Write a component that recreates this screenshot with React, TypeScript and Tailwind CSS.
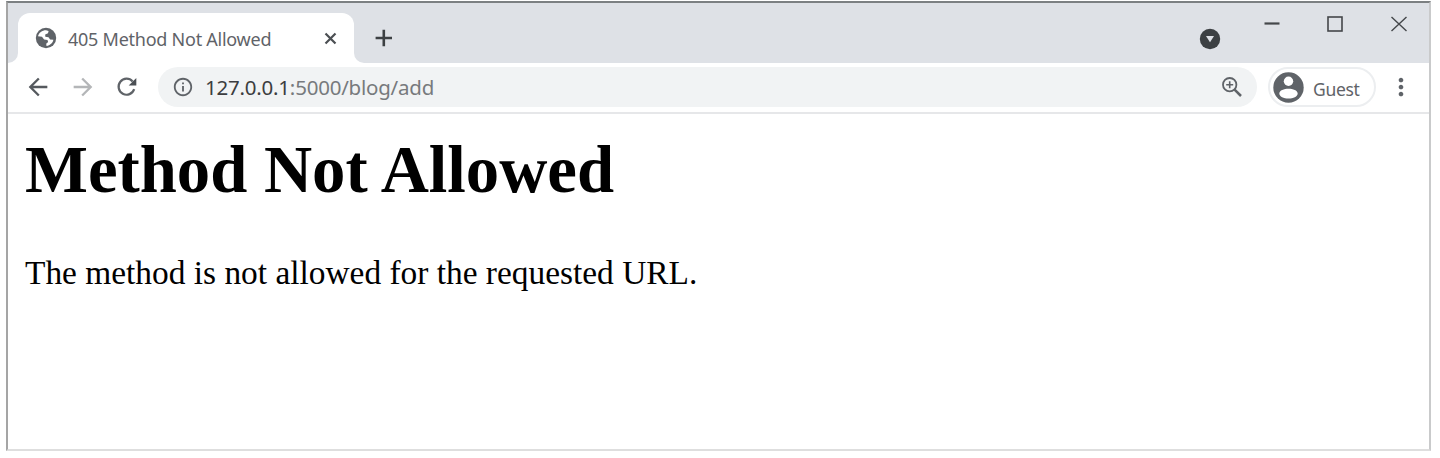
import type { ReactNode } from "react";
import { MdArrowBack, MdArrowForward, MdInfoOutline, MdMoreVert } from "react-icons/md";

function GlobeIcon() {
  return (
    <svg className="h-6 w-6 shrink-0" viewBox="0 0 24 24">
      <circle cx="12" cy="12" r="10.2" fill="#5f6368" />
      <path
        d="M4 10.2C5 6.7 8 4.300 12 4.300l2.600.6-.6 2.300-2.800 1.400.1 2.200 3.200.5 1.600 2.200 3.300.3c-.5 3-3.300 5.700-6.900 6.200l-.3-2.200 1.900-1.700-.6-2-3.400-.7-2.100-2.600z"
        fill="#fff"
      />
    </svg>
  );
}

function ReloadIcon() {
  return (
    <svg className="ml-[16px] h-7 w-7 shrink-0" viewBox="0 0 28 28" aria-label="Reload">
      <path d="M21.200 16.200A8 8 0 1 1 19.600 8.400" fill="none" stroke="#5f6368" strokeWidth="2.2" />
      <path d="M23.300 5v7.600h-7.600z" fill="#4b4f54" />
    </svg>
  );
}

function ZoomIcon() {
  return (
    <svg className="h-[26px] w-[26px] shrink-0" viewBox="0 0 26 26" aria-label="Zoom">
      <g fill="none" stroke="#5f6368">
        <circle cx="10.700" cy="10.700" r="6.700" strokeWidth="1.8" />
        <path d="M15.600 15.600l6.400 6.400" strokeWidth="2.500" />
        <path d="M7.200 10.700h7M10.700 7.200v7" strokeWidth="1.6" />
      </g>
    </svg>
  );
}

function GuestIcon() {
  return (
    <svg className="ml-[3px] h-[31px] w-[31px] shrink-0" viewBox="0 0 31 31">
      <circle cx="15.500" cy="15.500" r="15.200" fill="#5f6368" />
      <circle cx="15.500" cy="9.300" r="4.700" fill="#fff" />
      <path d="M6.300 21.500c0-3.300 4.800-4.800 9.200-4.800s9.200 1.500 9.200 4.800c0 3-4.500 5-9.200 5s-9.200-2-9.200-5z" fill="#fff" />
    </svg>
  );
}

function WindowControls() {
  return (
    <div className="ml-auto flex items-start text-[#44474a]">
      <svg className="mt-[25px] h-[22px] w-[22px]" viewBox="0 0 22 22" aria-label="Search tabs">
        <circle cx="11" cy="11" r="10.2" fill="#3c4043" />
        <path d="M7 8h8l-4 6.2z" fill="#dee1e6" />
      </svg>
      <svg className="mt-[12px] ml-[42px] h-5 w-[18px]" viewBox="0 0 18 20" aria-label="Minimize">
        <path d="M1.5 8.5h15" stroke="currentColor" strokeWidth="2.2" />
      </svg>
      <svg className="mt-[12px] ml-[45px] h-5 w-[18px]" viewBox="0 0 18 20" aria-label="Maximize">
        <rect x="2" y="2" width="14" height="14" fill="none" stroke="currentColor" strokeWidth="1.6" />
      </svg>
      <svg className="mt-[12px] mr-[21px] ml-[46px] h-5 w-[18px]" viewBox="0 0 18 20" aria-label="Close">
        <path d="M1.500 2l15 14M16.500 2l-15 14" stroke="currentColor" strokeWidth="1.4" />
      </svg>
    </div>
  );
}

function TabStrip() {
  return (
    <div className="flex h-[60px] bg-[#dee1e6]">
      <div className="flex w-[10px] items-end bg-white">
        <div className="h-full w-full rounded-br-[10px] bg-[#dee1e6]" />
      </div>
      <div className="flex h-full w-[336px] bg-[#dee1e6] pt-[10px]">
        <div className="flex h-full w-full items-center rounded-t-[12px] bg-white pl-4">
          <GlobeIcon />
          <span className="ml-[10px] w-[256px] shrink-0 pt-0.5 font-['Noto_Sans',sans-serif] text-[18px] leading-6 tracking-[-0.25px] whitespace-nowrap text-[#5f6368]">
            405 Method Not Allowed
          </span>
          <svg className="h-[13px] w-[13px] shrink-0" viewBox="0 0 13 13" aria-label="Close tab">
            <path d="M1.500 1.500l10 10M11.500 1.500l-10 10" stroke="#4b4f53" strokeWidth="2.200" />
          </svg>
        </div>
      </div>
      <div className="w-[10px] bg-white">
        <div className="h-full w-full rounded-bl-[10px] bg-[#dee1e6]" />
      </div>
      <svg className="mt-[25px] ml-[10px] h-5 w-5" viewBox="0 0 20 20" aria-label="New tab">
        <path d="M1.600 10h16.400M9.800 1.700v16.600" stroke="#3c4043" strokeWidth="2.6" />
      </svg>
      <WindowControls />
    </div>
  );
}

function AddressBar({ children }: { children: ReactNode }) {
  return (
    <div className="ml-[17px] flex h-10 w-[1099px] items-center rounded-full bg-[#f1f3f4] pr-3 pl-[14px]">
      <MdInfoOutline className="h-[22px] w-[22px] text-[#5f6368]" />
      <span className="ml-[11px] flex-1 font-['Noto_Sans',sans-serif] text-[20.5px] leading-7 tracking-[-0.22px] text-[#777a7d]">
        {children}
      </span>
      <ZoomIcon />
    </div>
  );
}

function Toolbar() {
  return (
    <div className="flex h-[51px] items-center border-b-2 border-[#e6e7e9] pb-px pl-4">
      <MdArrowBack className="h-7 w-7 text-[#55595e]" />
      <MdArrowForward className="ml-[17px] h-7 w-7 text-[#b4b6b8]" />
      <ReloadIcon />
      <AddressBar>
        <span className="text-[#3c3d40]">127.0.0.1</span>:5000/blog/add
      </AddressBar>
      <div className="ml-[11px] flex h-10 w-[108px] items-center rounded-full border-2 border-[#eceef0]">
        <GuestIcon />
        <span className="ml-[9px] pt-[3px] font-['Noto_Sans',sans-serif] text-[17.5px] leading-6 tracking-[-0.3px] text-[#5f6368]">
          Guest
        </span>
      </div>
      <MdMoreVert className="ml-[11px] h-7 w-7 text-[#5f6368]" />
    </div>
  );
}

export default function App() {
  return (
    <div className="h-[458px] w-[1440px] bg-white pt-px pl-[6px]">
      <div className="h-[450px] w-[1425px] border-2 border-t-[#7c8082] border-r-[#c9cacb] border-b-[#dedede] border-l-[#a5a5a5] bg-white">
        <TabStrip />
        <Toolbar />
        <main className="pl-[17px] font-['Liberation_Serif',serif] text-black">
          <h1 className="mt-[18px] text-[66.7px] leading-[76px] font-bold">Method Not Allowed</h1>
          <p className="mt-[46px] text-[33.4px] leading-[38px]">
            The method is not allowed for the requested URL.
          </p>
        </main>
      </div>
    </div>
  );
}
